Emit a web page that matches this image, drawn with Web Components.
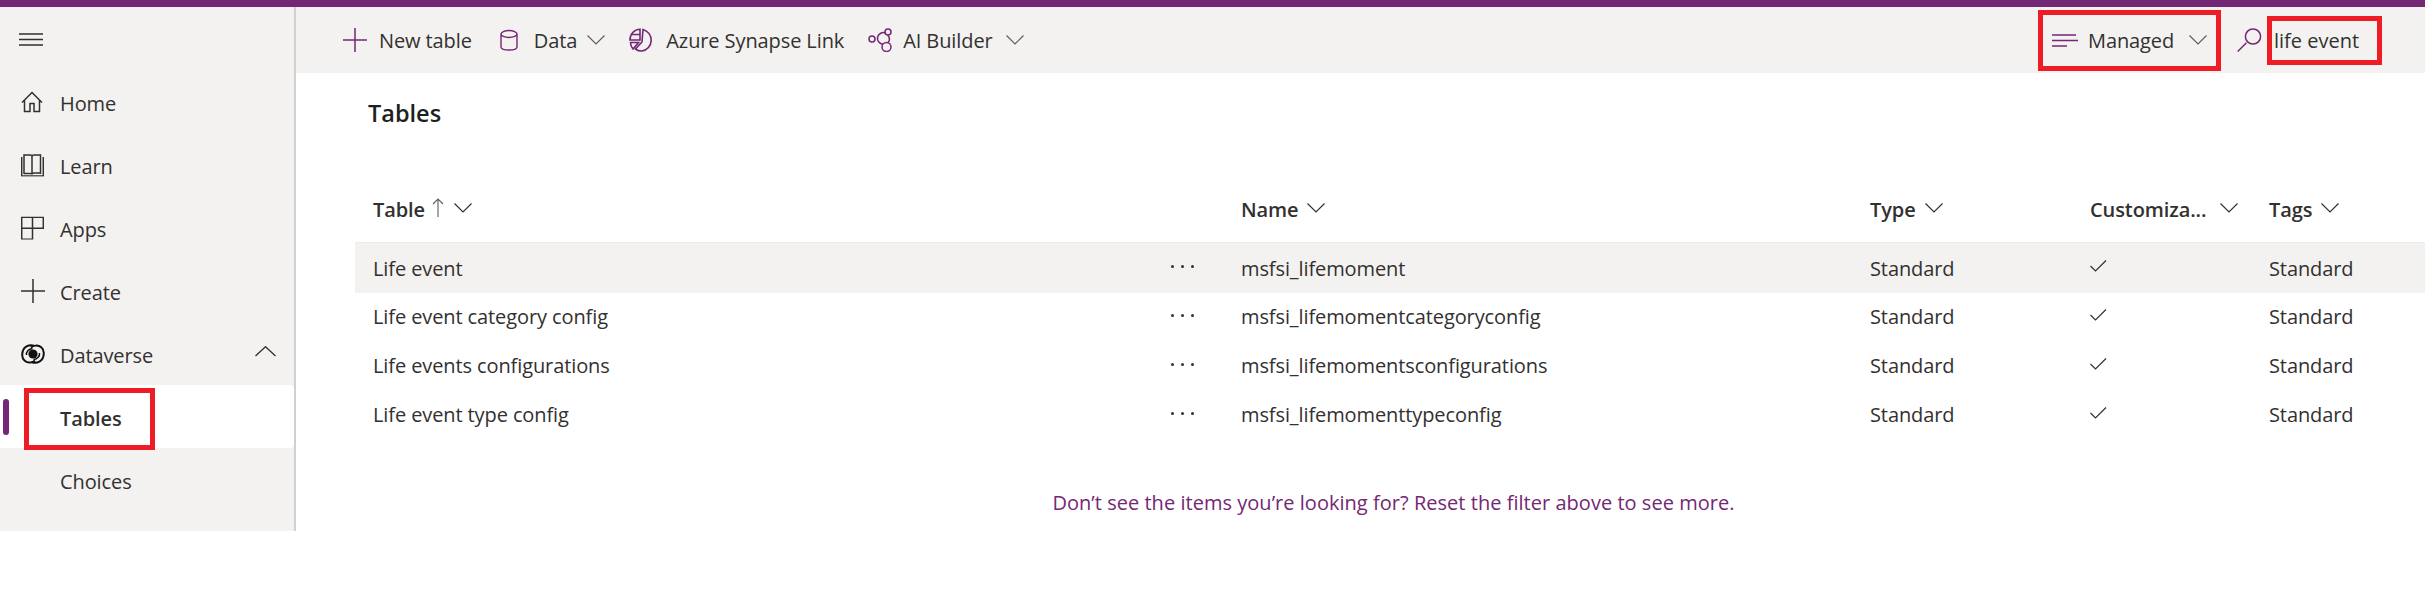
<!DOCTYPE html>
<html>
<head>
<meta charset="utf-8">
<title>Tables</title>
<style>
  html, body { margin: 0; background: #fff; }
  body { font: 20px "Open Sans", "Noto Sans", sans-serif; color: #323130; width: 2425px; height: 601px; overflow: hidden; }
  .shell { display: flex; align-items: flex-start; }
</style>
</head>
<body>
<top-band></top-band>
<div class="shell">
  <app-sidebar>
    <nav-item icon="home">Home</nav-item>
    <nav-item icon="book">Learn</nav-item>
    <nav-item icon="apps">Apps</nav-item>
    <nav-item icon="plus">Create</nav-item>
    <nav-item icon="dataverse" expanded>Dataverse</nav-item>
    <nav-item selected marked>Tables</nav-item>
    <nav-item>Choices</nav-item>
  </app-sidebar>
  <main-area>
    <app-toolbar></app-toolbar>
    <page-title>Tables</page-title>
    <tables-grid></tables-grid>
    <reset-note>Don’t see the items you’re looking for? Reset the filter above to see more.</reset-note>
  </main-area>
</div>

<script>
const ICONS = {
  menu: '<path d="M0 1h24M0 6.500h24M0 12h24"/>',
  home: '<path d="M1 11.500 11 1.500l10 10M3.500 9v11.500h5.500v-8h4v8h5.500V9"/>',
  book: '<path d="M.7 3.500v19h21.600v-19M3 20.500V1.500h6.500q1.500 0 1.500 2v17.500q0-1-1.500-1H3zM19.500 20.500V1.500H13q-2 0-2 2M19.500 19.500H12.500q-1.500 0-1.500 1.500"/>',
  apps: '<path d="M.7.7h21.600v11H11.500v11H.7zM.7 11.700h10.800M11.500.7v11"/>',
  plus: '<path d="M0 12h24M12 0v24"/>',
  chevron: '<path d="M.5.5 9 9l8.500-8.500"/>',
  chevronUp: '<path d="M.5 10 10.500.7 20.500 10"/>',
  data: '<path d="M1 5v13c0 1.800 3.500 3 8 3s8-1.200 8-3V5M1 5c0-1.800 3.500-3.500 8-3.500s8 1.700 8 3.500-3.500 3.500-8 3.500S1 6.800 1 5z"/>',
  synapse: '<path d="M11 1.200A10.500 10.500 0 0 0 1 12h10zM1.500 6.500H11M1.500 14.500h8L4 21a10 10 0 0 1-2.500-6.500zM14 1.500A11 11 0 0 1 13 23a10 10 0 0 1-6.500-2L13 14z"/>',
  ai: '<circle cx="4" cy="11" r="3"/><circle cx="20" cy="4" r="3"/><circle cx="18.500" cy="19" r="4.500"/><path d="M18 5.200A6 6 0 0 0 9.500 9.500a6 6 0 0 0 5.500 6.800M19.800 7.200a6 6 0 0 1 .2 7.600"/>',
  lines: '<path d="M0 1h24M0 6.500h26M0 12h15"/>',
  search: '<path d="M.7 23.500 9.500 14.700"/><circle cx="16" cy="8.500" r="7.600"/>',
  check: '<path d="M.5 6 5.500 11 16 .5"/>',
  arrow: '<path d="M6 19V1M1 6l5-5 5 5"/>'
};

function icon(name, w, h, vb, color = 'currentColor', sw = 1.5) {
  return `<svg width="${w}" height="${h}" viewBox="${vb}" fill="none" stroke="${color}" stroke-width="${sw}" style="display:block;flex:none">${ICONS[name]}</svg>`;
}

// two interlocked lobes round a dark eye
function dataverseIcon() {
  return `<svg width="24" height="20" viewBox="0 0 24 20" fill="none" stroke="#111" stroke-width="2" style="display:block;flex:none">
    <path d="M13 1.800C9 .2 1.200 2 1.200 11c0 5 4 8 8.300 7.500 2.200-.2 3.500-1 4.500-2"/>
    <path d="M11 18.200c4 1.600 11.800-.2 11.800-9.200 0-5-4-8-8.300-7.500-2.200.2-3.500 1-4.500 2"/>
    <circle cx="12" cy="10" r="4.600" fill="#111" stroke="none"/>
    <path d="M5.500 11c-.5-3 2-6 6-6.500M18.500 9c.5 3-2 6-6 6.500" stroke-width="1.500"/>
  </svg>`;
}

// small base class, every element just hands over its shadow html
class ShadowEl extends HTMLElement {
  constructor() {
    super();
    this.attachShadow({ mode: 'open' });
  }
  connectedCallback() {
    this.shadowRoot.innerHTML = this.html();
  }
}

class TopBand extends ShadowEl {
  html() { return `<style>:host { display: block; height: 7px; background: #742774; }</style>`; }
}

class AppSidebar extends ShadowEl {
  html() {
    return `<style>
      :host { display: block; flex: none; box-sizing: border-box; width: 296px; height: 524px; background: #f3f2f1; border-right: 2px solid #d2d0ce; }
      .burger { padding: 26px 0 0 19px; height: 37px; color: #323130; }
      .items { display: flex; flex-direction: column; }
    </style>
    <div class="burger">${icon('menu', 24, 13, '0 0 24 13', 'currentColor', 1.4)}</div>
    <div class="items"><slot></slot></div>`;
  }
}

class NavItem extends ShadowEl {
  html() {
    const name = this.getAttribute('icon');
    const sel = this.hasAttribute('selected');
    const boxes = { home: [22, 22, '0 0 22 22'], book: [23, 23, '0 0 23 23'], apps: [23, 23, '0 0 23 23'], plus: [24, 24, '0 0 24 24'] };
    let glyph = '';
    if (name === 'dataverse') glyph = dataverseIcon();
    else if (name) glyph = icon(name, ...boxes[name]);
    return `<style>
      :host { display: block; }
      .row { position: relative; box-sizing: border-box; display: flex; align-items: center; height: 63px; padding: 3px 0 0 60px; font-size: 20px; letter-spacing: -.1px; color: #323130; }
      .row.sel { background: #fff; border-radius: 0 4px 4px 0; font-weight: 600; }
      .ico { position: absolute; left: 21px; top: 50%; transform: translateY(-50%); }
      .up { position: absolute; left: 255px; top: 24px; }
      .mark { position: absolute; left: 3px; top: 14px; width: 6px; height: 36px; border-radius: 3px; background: #742774; }
      .red { position: absolute; left: 24px; top: 3px; width: 131px; height: 62px; box-sizing: border-box; border: 5px solid #ee1c25; }
    </style>
    <div class="row ${sel ? 'sel' : ''}">
      ${glyph ? `<span class="ico">${glyph}</span>` : ''}
      <slot></slot>
      ${this.hasAttribute('expanded') ? `<span class="up">${icon('chevronUp', 21, 11, '0 0 21 11', 'currentColor', 1.3)}</span>` : ''}
      ${sel ? '<span class="mark"></span>' : ''}
      ${this.hasAttribute('marked') ? '<span class="red"></span>' : ''}
    </div>`;
  }
}

class MainArea extends ShadowEl {
  html() {
    return `<style>:host { display: block; flex: 1; min-width: 0; }</style><slot></slot>`;
  }
}

class ToolButton extends ShadowEl {
  html() {
    const c = this.hasAttribute('caret');
    return `<style>
      :host { display: inline-flex; align-items: center; height: 66px; font-size: 20px; letter-spacing: -.1px; color: #323130; }
      .txt { margin-left: var(--text-gap, 13px); }
      .caret { margin-left: var(--caret-gap, 13px); color: #605e5c; }
    </style>
    <slot name="icon"></slot><span class="txt"><slot></slot></span>
    ${c ? `<span class="caret">${icon('chevron', 18, 10, '0 0 18 10', 'currentColor', 1.2)}</span>` : ''}`;
  }
}

class AppToolbar extends ShadowEl {
  html() {
    const P = '#742774';
    return `<style>
      :host { display: flex; align-items: center; height: 66px; background: #f3f2f1; padding-left: 47px; position: relative; }
      tool-button { flex: none; }
      .new { margin-right: 28px; --text-gap: 12px; }
      .data { margin-right: 24px; --text-gap: 16px; --caret-gap: 10px; }
      .syn { margin-right: 24px; }
      .spring { flex: 1; }
      .managed { box-sizing: border-box; width: 183px; height: 61px; margin-right: 16px; padding-left: 9px; border: 5px solid #ee1c25; --text-gap: 10px; --caret-gap: 15px; }
      .search { display: block; margin-right: 5px; }
      .query { box-sizing: border-box; width: 115px; height: 49px; margin-right: 43px; padding-left: 2px; display: flex; align-items: center; border: 5px solid #ee1c25; font-size: 20px; color: #323130; }
    </style>
    <tool-button class="new"><span slot="icon">${icon('plus', 24, 24, '0 0 24 24', P, 1.5)}</span>New table</tool-button>
    <tool-button class="data" caret><span slot="icon">${icon('data', 18, 22, '0 0 18 22', P, 1.4)}</span>Data</tool-button>
    <tool-button class="syn"><span slot="icon">${icon('synapse', 24, 24, '0 0 24 24', P, 1.6)}</span>Azure Synapse Link</tool-button>
    <tool-button caret style="--text-gap:11px"><span slot="icon">${icon('ai', 24, 24, '0 0 24 24', P, 1.5)}</span>AI Builder</tool-button>
    <span class="spring"></span>
    <tool-button class="managed" caret><span slot="icon">${icon('lines', 26, 13, '0 0 26 13', P, 1.4)}</span>Managed</tool-button>
    <span class="search">${icon('search', 25, 24, '0 0 25 24', P, 1.5)}</span>
    <span class="query">life event</span>`;
  }
}

class PageTitle extends ShadowEl {
  html() {
    return `<style>:host { display: block; padding: 17px 0 0 72px; height: 46px; font-size: 23.500px; font-weight: 600; line-height: 46px; color: #201f1e; }</style><slot></slot>`;
  }
}

const COLS = '868px 629px 220px 179px 1fr';
const TABLES = [
  ['Life event', 'msfsi_lifemoment'],
  ['Life event category config', 'msfsi_lifemomentcategoryconfig'],
  ['Life events configurations', 'msfsi_lifemomentsconfigurations'],
  ['Life event type config', 'msfsi_lifemomenttypeconfig']
];

class TablesGrid extends ShadowEl {
  html() {
    const caret = icon('chevron', 18, 10, '0 0 18 10', '#323130', 1.2);
    const rows = TABLES.map(([label, name], i) => `
      <div class="row ${i === 0 ? 'hot' : ''}">
        <div class="first"><span>${label}</span><span class="more"><i></i><i></i><i></i></span></div>
        <div>${name}</div>
        <div>Standard</div>
        <div>${icon('check', 17, 12, '0 0 17 12', '#323130', 1.2)}</div>
        <div>Standard</div>
      </div>`).join('');
    return `<style>
      :host { display: block; margin: 46px 0 0 59px; font-size: 20px; letter-spacing: -.1px; color: #323130; }
      .head, .row { display: grid; grid-template-columns: ${COLS}; align-items: center; padding-left: 18px; }
      .head { height: 61px; padding-bottom: 5px; border-bottom: 1px solid #edebe9; font-weight: 600; box-sizing: border-box; }
      .row { height: 49px; }
      .hot { background: #f3f2f1; height: 50px; margin-bottom: -1px; }
      .cell { display: flex; align-items: center; gap: 9px; }
      .cell.wide { gap: 14px; }
      .arrow { margin: 0 1px 0 -2px; }
      .first { position: relative; }
      .more { position: absolute; left: 798px; top: 50%; margin-top: -3px; display: flex; gap: 7px; }
      .more i { width: 3px; height: 3px; border-radius: 50%; background: #323130; }
      svg { margin-top: -4px; }
    </style>
    <div class="head">
      <div class="cell">Table <span class="arrow">${icon('arrow', 12, 19, '0 0 12 19', '#605e5c', 1.1)}</span>${caret}</div>
      <div class="cell">Name ${caret}</div>
      <div class="cell">Type ${caret}</div>
      <div class="cell wide">Customiza... ${caret}</div>
      <div class="cell">Tags ${caret}</div>
    </div>
    ${rows}`;
  }
}

class ResetNote extends ShadowEl {
  html() {
    return `<style>:host { display: block; margin-top: 50px; padding-left: 66px; text-align: center; font-size: 20px; letter-spacing: .03px; color: #742774; }</style><slot></slot>`;
  }
}

customElements.define('top-band', TopBand);
customElements.define('app-sidebar', AppSidebar);
customElements.define('nav-item', NavItem);
customElements.define('main-area', MainArea);
customElements.define('tool-button', ToolButton);
customElements.define('app-toolbar', AppToolbar);
customElements.define('page-title', PageTitle);
customElements.define('tables-grid', TablesGrid);
customElements.define('reset-note', ResetNote);
</script>
</body>
</html>
